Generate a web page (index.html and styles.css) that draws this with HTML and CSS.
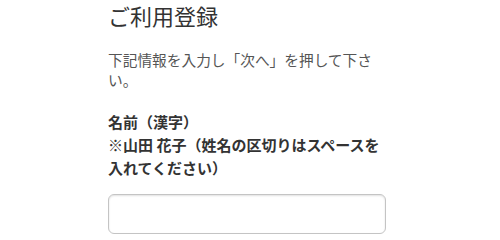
FILE: index.html
```html
<!DOCTYPE html>
<html lang="ja">
<head>
<meta charset="utf-8">
<link rel="stylesheet" href="styles.css">
</head>
<body>
<main class="page">
  <h1 class="title">ご利用登録</h1>
  <p class="lead">下記情報を入力し「次へ」を押して下さい。</p>
  <label class="field-label" for="name">名前（漢字）<br>※山田 花子（姓名の区切りはスペースを入れてください）</label>
  <input class="field-input" id="name" type="text">
</main>
</body>
</html>
```

FILE: styles.css
```css
html, body {
  margin: 0;
  padding: 0;
  background: #ffffff;
}
body {
  font-family: "Noto Sans CJK JP", "Noto Sans", sans-serif;
  color: #333333;
  text-spacing-trim: space-all;
}
.page {
  display: flex;
  flex-direction: column;
  width: 278px;
  margin-left: 108px;
  padding-top: 0;
}
.title {
  margin: 0;
  font-size: 22px;
  line-height: 30px;
  font-weight: 400;
  color: #333333;
}
.lead {
  margin: 20px 0 0;
  font-size: 14.7px;
  line-height: 20px;
  color: #555555;
  line-break: strict;
}
.field-label {
  margin-top: 20px;
  font-size: 15px;
  line-height: 23px;
  font-weight: 700;
  color: #333333;
}
.field-input {
  margin-top: 15px;
  box-sizing: border-box;
  width: 100%;
  height: 40px;
  border: 1px solid #c4c4c4;
  border-radius: 6px;
  background: #ffffff;
  box-shadow: inset 0 1px 2px rgba(0, 0, 0, 0.12);
  outline: none;
}
```
